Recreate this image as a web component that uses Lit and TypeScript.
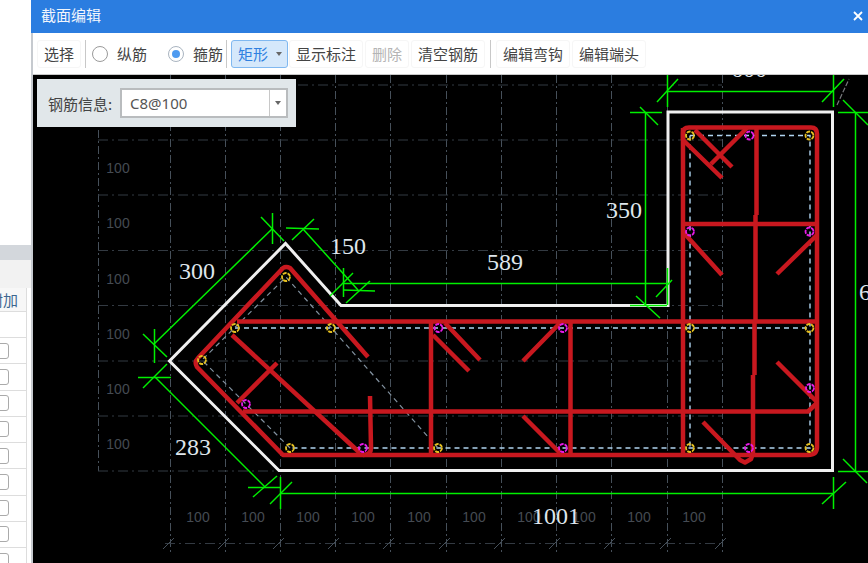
import { LitElement, html, svg, css } from 'lit';
import { customElement } from 'lit/decorators.js';

type Seg = [number, number, number, number];

const gridX = [170, 225, 280, 335, 390, 446, 501, 556, 611, 667, 722];
const gridY = [85, 140, 195, 250.5, 305.5, 361, 416, 471];
const bottomLabels: [number, string][] = [
  [198, '100'], [253, '100'], [308, '100'], [363, '100'], [419, '100'],
  [474, '100'], [529, '100'], [584, '100'], [639, '100'], [694, '100'],
];
const sideLabels = [168, 223, 279, 334, 389, 444];

const green: Seg[] = [
  // top 600
  [667, 91, 833, 91], [667, 75, 667, 107], [833, 75, 833, 107], [657, 102, 678, 79], [822, 102, 844, 79],
  // 350
  [645, 112, 645, 305], [630, 112, 662, 112], [640, 107, 658, 125], [630, 305, 667, 305], [636, 296, 660, 318],
  // 589
  [343, 283, 667, 283], [667, 268, 667, 305], [656, 297, 672, 280], [343, 268, 343, 297], [330, 296, 353, 273],
  [343, 290, 375, 291], [346, 303, 370, 281],
  // right 600
  [855, 112, 855, 471], [838, 112, 868, 112], [843, 100, 868, 125], [838, 471, 868, 471], [843, 459, 867, 483],
  // 1001
  [280, 493, 833, 493], [833, 477, 833, 509], [822, 504, 846, 482], [280, 477, 280, 509], [270, 504, 292, 482],
  // 283
  [155, 377, 265, 487], [138, 377, 171, 377], [143, 388, 167, 364], [248, 487, 281, 487], [253, 497, 277, 476],
  // 300
  [154, 344, 272, 229], [154, 329, 154, 363], [143, 334, 167, 357], [272, 213, 272, 244], [261, 217, 284, 241],
  // 150
  [303, 229, 358, 290], [286, 228, 319, 229], [292, 240, 314, 219],
];

const red: string[] = [
  // right column outer stirrup
  'M683 140 V133 Q683 127.5 689 127.5 H811 Q817 127.5 817 134 V447 Q817 455 808 455 H283 L197 367 Q194 362 198 358 L283 268 Q286 266 290 268 L368 357',
  'M683 128 V455',
  'M683 224 H817',
  'M237 321.5 H817',
  'M243 411.5 H808 L817 403',
  'M756.5 128 V215 M755.5 215 V321 M754.5 321 V375 M753 375 V453',
  'M683 140 L722 178 M695 130 L732 167 M747 128 L711 164',
  'M683 232 L722 275 M817 235 L777 274 M777 362 L817 402',
  'M703 422 L740 460 L745 462.5 L751 459 L753 453',
  'M431 321 V455 M570.5 321 V455',
  'M445 323 L480 360 M433 335 L469 371 M560 323 L523 361 M523 416 L560 453',
  'M232 335 L360 453',
  'M237 403 L277 363',
  'M370 396 L371 448 Q371 455 363 455',
];

const hoops: [number, number, string][] = [
  [690, 135.5, 'y'], [749.5, 135.5, 'm'], [809.5, 135.5, 'y'],
  [690, 231.5, 'm'], [809.5, 231.5, 'm'],
  [690, 328, 'y'], [809.5, 328, 'y'], [810, 388, 'm'],
  [690, 448, 'y'], [749, 448, 'm'], [809.5, 448, 'y'],
  [286, 277, 'y'], [235, 328, 'y'], [331, 328, 'y'], [202, 360, 'y'],
  [246, 404, 'm'], [290, 448, 'y'], [363, 448, 'm'], [438, 448, 'y'],
  [438.5, 328, 'm'], [563, 328, 'm'], [563, 448, 'm'],
];

const dims: [number, number, string][] = [
  [197, 279, '300'], [348, 254, '150'], [505, 270, '589'], [624, 218, '350'],
  [193, 455, '283'], [556, 524, '1001'], [749, 77, '600'], [877, 300, '600'],
];

// axis-aligned lines sit on the pixel so they stay sharp
const snap = ([a, b, c, d]: Seg): Seg =>
  a === c ? [a + 0.5, b, c + 0.5, d] : b === d ? [a, b + 0.5, c, d + 0.5] : [a, b, c, d];

@customElement('section-canvas')
export class SectionCanvas extends LitElement {
  static override styles = css`
    :host { display: block; width: 100%; height: 100%; background: #000; }
    svg { display: block; }
    .grid-v { stroke: #46505a; stroke-width: 1; stroke-dasharray: 8 3 2 3; fill: none; }
    .grid-h { stroke: #333a42; stroke-width: 1; stroke-dasharray: 10 4 2 4; fill: none; }
    .tick { stroke: #46505a; stroke-width: 1; }
    .small { font: 14px "Liberation Sans", sans-serif; fill: #454b53; text-anchor: middle; }
    .dim { font: 24px "Liberation Serif", serif; fill: #dfe6ec; text-anchor: middle; }
    .bar { stroke: #c8181f; stroke-width: 4.5; fill: none; stroke-linejoin: round; }
    .green { stroke: #00f000; stroke-width: 1.5; }
    .outline { stroke: #f0f0f0; stroke-width: 3; fill: none; stroke-linejoin: miter; }
    .guide { stroke: #b0d4f0; stroke-width: 1.4; stroke-dasharray: 5 4; fill: none; }
    .guide-diag { stroke: #82919f; stroke-width: 1.2; stroke-dasharray: 5 4; fill: none; }
    .hoop { fill: none; stroke-width: 1.8; stroke-dasharray: 4 1; }
    .y { stroke: #e6c020; }
    .m { stroke: #e81ae8; }
  `;

  override render() {
    return html`<svg width="835" height="488" viewBox="33 75 835 488">
      ${gridX.map((x) => svg`<line class="grid-v" x1=${x + 0.5} y1="75" x2=${x + 0.5} y2="553"></line>`)}
      <line class="grid-v" x1="98.5" y1="130" x2="98.5" y2="471"></line>
      ${gridY.map((y) => svg`<line class="grid-h" x1="98" y1=${y} x2="722" y2=${y}></line>`)}
      <line class="grid-h" x1="165" y1="543.5" x2="722" y2="543.5"></line>
      ${gridX.map((x) => svg`<line class="tick" x1=${x - 7} y1="549" x2=${x + 4} y2="538"></line>`)}
      ${sideLabels.map((y) => svg`<text class="small" x="118" y=${y + 5}>100</text>`)}
      ${bottomLabels.map(([x, t]) => svg`<text class="small" x=${x} y="522">${t}</text>`)}
      <path class="guide" d="M690 135.5 H810 V448 H290 M235 328 H810 M690 135.5 V448"></path>
      <path class="guide-diag" d="M290 448 L202 360 L286 277 L438 448"></path>
      <path class="outline" d="M668 305.5 V112 H832.5 V470.5 H279 L169.5 361 L285.5 243.5 L341 305.5 Z"></path>
      ${green.map(snap).map(([a, b, c, d]) => svg`<line class="green" x1=${a} y1=${b} x2=${c} y2=${d}></line>`)}
      <line x1="837" y1="105" x2="849" y2="79" stroke="#77797c" stroke-width="1.2" stroke-dasharray="5 2"></line>
      ${red.map((d) => svg`<path class="bar" d=${d}></path>`)}
      ${hoops.map(([x, y, c]) => svg`<circle class="hoop ${c}" cx=${x} cy=${y} r="4"></circle>`)}
      ${dims.map(([x, y, t]) => svg`<text class="dim" x=${x} y=${y}>${t}</text>`)}
    </svg>`;
  }
}

@customElement('app-root')
export class AppRoot extends LitElement {
  static override styles = css`
    :host {
      display: flex;
      width: 868px;
      height: 563px;
      overflow: hidden;
      background: #fff;
      font-family: "Noto Sans CJK SC", "Liberation Sans", sans-serif;
      font-size: 15px;
      color: #444;
    }
    .side {
      width: 31px;
      flex: none;
      display: flex;
      flex-direction: column;
      overflow: hidden;
    }
    .side-top { height: 245px; flex: none; }
    .side-band { height: 15px; flex: none; background: #d3d7dc; }
    .side-tabs { height: 28px; flex: none; background: #f2f2f2; }
    .side-head {
      height: 23px;
      flex: none;
      width: 18px;
      padding-right: 8px;
      display: flex;
      justify-content: flex-end;
      align-items: center;
      background: #f7f7f7;
      color: #3d6690;
      white-space: nowrap;
      overflow: hidden;
      border-right: 1px solid #ddd;
      border-bottom: 1px solid #ddd;
    }
    .side-blank { height: 25px; flex: none; width: 26px; border-right: 1px solid #ddd; border-bottom: 1px solid #ddd; }
    .side-row {
      height: 25.25px;
      flex: none;
      width: 26px;
      border-right: 1px solid #ddd;
      border-bottom: 1px solid #ddd;
      display: flex;
      align-items: center;
      overflow: hidden;
    }
    .check {
      width: 14px;
      height: 14px;
      margin-left: -7px;
      flex: none;
      border: 1px solid #aaa;
      border-radius: 3px;
    }
    .dialog {
      flex: 1;
      min-width: 0;
      display: flex;
      flex-direction: column;
    }
    .title {
      height: 33px;
      box-sizing: border-box;
      flex: none;
      background: #2b7de0;
      color: #f2f6fc;
      display: flex;
      align-items: center;
      justify-content: space-between;
      padding: 0 5px 5px 10px;
    }
    .close { display: block; margin-top: 3px; }
    .body {
      flex: 1;
      min-height: 0;
      display: flex;
      flex-direction: column;
      border-left: 2px solid #c6cacf;
    }
    .toolbar {
      height: 41px;
      flex: none;
      display: flex;
      align-items: center;
      gap: 2px;
      padding-left: 4px;
      background: #fff;
      border-bottom: 1px solid #c8c8c8;
      white-space: nowrap;
    }
    .btn {
      height: 26px;
      padding: 0 6px;
      display: flex;
      align-items: center;
      border: 1px solid #f6f6f6;
      border-radius: 3px;
    }
    .btn.off { color: #b4b4b4; }
    .sep { width: 1px; height: 28px; background: #c8c8c8; flex: none; margin-left: 2px; }
    .sep.before-shape { margin-left: 1px; }
    .sep.wide { margin: 0 3px; }
    .radio {
      display: flex;
      align-items: center;
      gap: 9px;
      margin-left: 4px;
    }
    .radio.next { margin-left: 19px; }
    .dot {
      width: 16px;
      height: 16px;
      box-sizing: border-box;
      border: 1px solid #9a9a9a;
      border-radius: 50%;
      display: flex;
      align-items: center;
      justify-content: center;
    }
    .dot.on { border-color: #a9b4c0; }
    .dot.on::after { content: ""; width: 8px; height: 8px; border-radius: 50%; background: #4f9bf0; }
    .shape {
      width: 57px;
      height: 28px;
      box-sizing: border-box;
      margin: 0 -1px 0 2px;
      padding-left: 6px;
      display: flex;
      align-items: center;
      gap: 8px;
      background: #d5e8fb;
      border: 1px solid #80b8f0;
      border-radius: 3px;
      color: #2f80e0;
    }
    .caret {
      width: 0;
      height: 0;
      border-left: 3.5px solid transparent;
      border-right: 3.5px solid transparent;
      border-top: 4px solid #666;
    }
    .stage {
      position: relative;
      flex: 1;
      min-height: 0;
    }
    .info {
      position: absolute;
      left: 4px;
      top: 4px;
      width: 259px;
      height: 48px;
      box-sizing: border-box;
      padding-left: 11px;
      display: flex;
      align-items: center;
      justify-content: flex-start;
      background: #e1e7ea;
      white-space: nowrap;
    }
    .info-label { width: 72px; flex: none; }
    .combo {
      width: 168px;
      height: 30px;
      box-sizing: border-box;
      display: flex;
      align-items: stretch;
      background: #fff;
      border: 2px solid #b9bcbe;
    }
    .combo-text {
      flex: 1;
      padding-left: 8px;
      display: flex;
      align-items: center;
      color: #555;
      font-family: "Noto Sans", "Liberation Sans", sans-serif;
    }
    .combo-arrow {
      width: 16px;
      flex: none;
      display: flex;
      align-items: center;
      justify-content: center;
      border-left: 1px solid #c8c8c8;
    }
  `;

  override render() {
    return html`
      <div class="side">
        <div class="side-top"></div>
        <div class="side-band"></div>
        <div class="side-tabs"></div>
        <div class="side-head">附加</div>
        <div class="side-blank"></div>
        ${Array.from({ length: 9 }, () => html`<div class="side-row"><div class="check"></div></div>`)}
      </div>
      <div class="dialog">
        <div class="title">
          <span>截面编辑</span>
          <svg class="close" width="10" height="10" viewBox="0 0 10 10">
            <path d="M1 1 L9 9 M9 1 L1 9" stroke="#fff" stroke-width="1.8"></path>
          </svg>
        </div>
        <div class="body">
          <div class="toolbar">
            <div class="btn">选择</div>
            <div class="sep"></div>
            <div class="radio"><div class="dot"></div><span>纵筋</span></div>
            <div class="radio next"><div class="dot on"></div><span>箍筋</span></div>
            <div class="sep before-shape"></div>
            <div class="shape"><span>矩形</span><div class="caret"></div></div>
            <div class="btn">显示标注</div>
            <div class="btn off">删除</div>
            <div class="btn">清空钢筋</div>
            <div class="sep wide"></div>
            <div class="btn">编辑弯钩</div>
            <div class="btn">编辑端头</div>
          </div>
          <div class="stage">
            <section-canvas></section-canvas>
            <div class="info">
              <span class="info-label">钢筋信息:</span>
              <div class="combo">
                <div class="combo-text">C8@100</div>
                <div class="combo-arrow"><div class="caret"></div></div>
              </div>
            </div>
          </div>
        </div>
      </div>
    `;
  }
}
